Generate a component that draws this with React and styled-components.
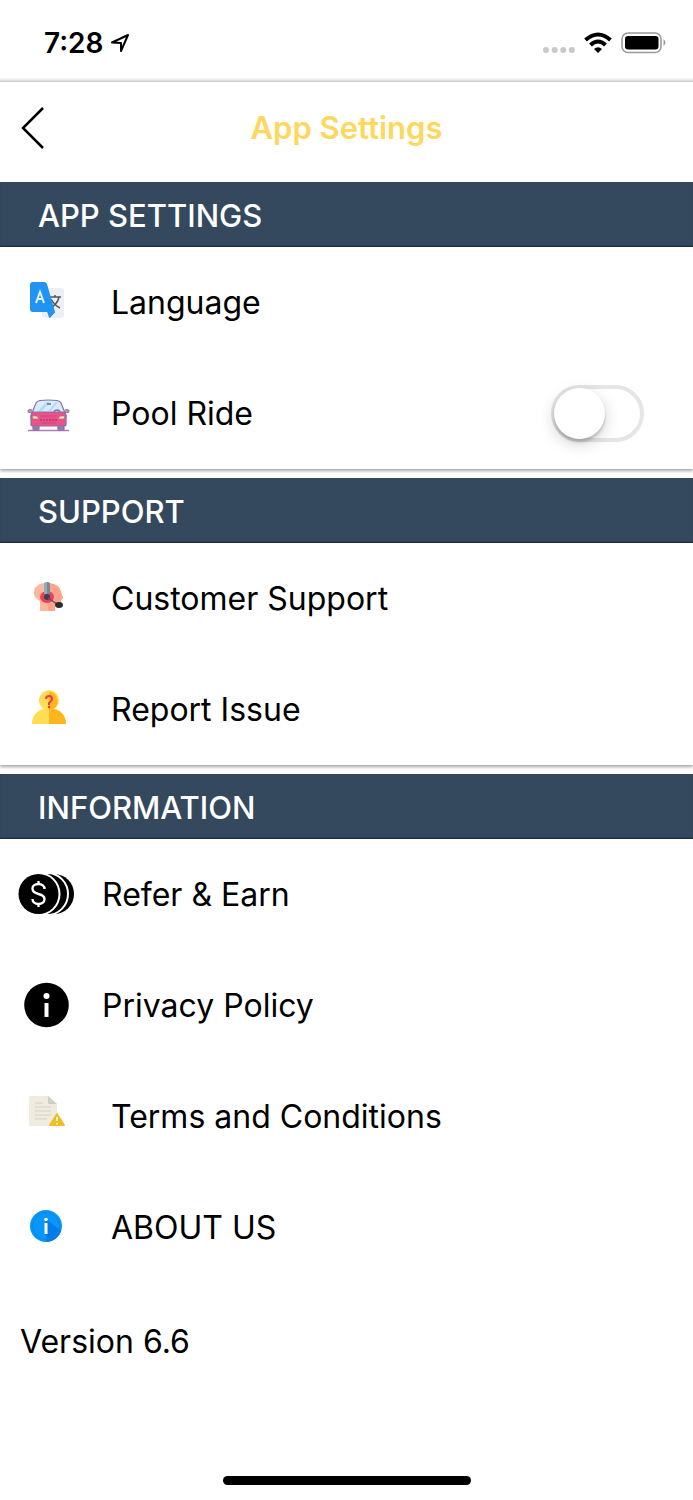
import { useState } from "react";
import styled, { createGlobalStyle } from "styled-components";

const GlobalStyle = createGlobalStyle`
  * {
    box-sizing: border-box;
  }

  body {
    margin: 0;
    background: #fff;
    color: #000;
    font-family: Inter, "Liberation Sans", sans-serif;
  }
`;

const Screen = styled.div`
  display: flex;
  flex-direction: column;
  min-height: 100vh;
`;

const StatusBar = styled.div`
  display: flex;
  justify-content: space-between;
  align-items: center;
  height: 82px;
  padding: 4px 26px 0 44px;
  border-bottom: 1px solid #d0d0d0;
  box-shadow: inset 0 -4px 3px -3px rgba(0, 0, 0, 0.2);
`;

const StatusGroup = styled.div`
  display: flex;
  align-items: center;
  gap: ${(props) => props.$gap};
`;

const Time = styled.span`
  font-size: 28px;
  font-weight: 600;
  line-height: 32px;
`;

const TopBar = styled.header`
  display: grid;
  grid-template-columns: 64px 1fr 64px;
  align-items: center;
  height: 100px;
  padding-bottom: 8px;
`;

const BackButton = styled.button`
  display: flex;
  align-items: center;
  height: 64px;
  padding: 0 0 0 20px;
  border: none;
  background: none;
  cursor: pointer;
`;

const Title = styled.h1`
  margin: 0;
  color: #fdd75e;
  font-size: 31px;
  font-weight: 600;
  line-height: 40px;
  text-align: center;
`;

const Section = styled.section`
  margin-bottom: ${(props) => (props.$last ? "0" : "9px")};
  box-shadow: ${(props) =>
    props.$last ? "none" : "0 2px 3px rgba(0, 0, 0, 0.35)"};
`;

const SectionTitle = styled.h2`
  height: 65px;
  margin: 0;
  padding: 0 38px;
  background: #34495e;
  box-shadow: inset 0 -2px 2px -1px #14253a;
  color: #fff;
  font-size: 31px;
  font-weight: 500;
  line-height: 67px;
`;

const List = styled.ul`
  margin: 0;
  padding: 0;
  list-style: none;
`;

const Item = styled.li`
  display: flex;
  align-items: center;
  justify-content: space-between;
  height: 111px;
  padding-right: 49px;
`;

const RowButton = styled.button`
  display: flex;
  align-items: center;
  flex: 1;
  gap: ${(props) => (props.$wide ? "27px" : "36px")};
  height: 111px;
  padding: 0 0 0 18px;
  border: none;
  background: none;
  color: inherit;
  font-family: inherit;
  font-size: 32px;
  line-height: 40px;
  text-align: left;
  cursor: pointer;
`;

const Icon = styled.svg`
  flex: none;
  width: 57px;
  height: 57px;
`;

const Switch = styled.input`
  appearance: none;
  display: flex;
  align-items: center;
  width: 93px;
  height: 57px;
  margin: 0;
  border: 4px solid #e5e5e5;
  border-radius: 29px;
  cursor: pointer;

  &::before {
    content: "";
    width: 51px;
    height: 51px;
    margin-left: ${(props) => (props.checked ? "35px" : "-1px")};
    border-radius: 50%;
    background: #fff;
    box-shadow: 0 5px 16px rgba(0, 0, 0, 0.18), 0 3px 3px rgba(0, 0, 0, 0.18);
  }

  &:checked {
    border-color: #4cd964;
    background: #4cd964;
  }
`;

const Version = styled.p`
  margin: 39px 20px;
  font-size: 32px;
  line-height: 40px;
`;

const HomeIndicator = styled.div`
  width: 248px;
  height: 9px;
  margin: auto auto 15px;
  border-radius: 5px;
  background: #000;
`;

const LanguageIcon = () => (
  <Icon viewBox="0 0 57 57" aria-hidden="true">
    <rect x="24" y="14" width="22" height="30" rx="3" fill="#eceff3" />
    <g fill="none" stroke="#50565e" strokeWidth="1.5">
      <path d="M31 23h12M37 21v2M41 23c-1 5-5 9-9 11M33 25c2 4 5 7 9 9" />
    </g>
    <path d="M30 38h7l-6 6z" fill="#0b6fd0" />
    <path
      d="M15 8h11a3 3 0 0 1 3 2l8 28-5 6-3-6H15a3 3 0 0 1-3-3V11a3 3 0 0 1 3-3z"
      fill="#2093f3"
    />
    <path
      d="M18 29l4-11 4 11M19.500 25h5"
      fill="none"
      stroke="#e4f2ff"
      strokeWidth="2"
    />
  </Icon>
);

const CarIcon = () => (
  <Icon viewBox="0 -1 57 57" aria-hidden="true">
    <path d="M10 44.500h41" stroke="#ae7ab5" strokeWidth="1.500" />
    <g stroke="#8770a8" strokeWidth="1.200">
      <path d="M15 36h6v7q0 1-1 1h-4q-1 0-1-1zM40 36h6v7q0 1-1 1h-4q-1 0-1-1z" fill="#8e83ad" />
      <path d="M14 26q-4 1-4-1 1-2 4-1M47 26q4 1 4-1-1-2-4-1" fill="#d9a3cf" />
      <path d="M14 27l4-10q1-2 4-2.500 8-1 17 0 3 .5 4 2.500l4 10z" fill="#d7edff" />
      <path d="M14 26h33q2 4 1 8v5q0 1-2 1H15q-2 0-2-1v-5q-1-4 1-8z" fill="#ec5287" />
    </g>
    <path d="M20 25l8-9h4l-8 9zM30 25l8-9h2l-7 9z" fill="#b5d8f8" />
    <path d="M29 18h4" stroke="#68669b" strokeWidth="1.500" />
    <path d="M36 27q0-3 3-3t3 3" fill="none" stroke="#8770a8" strokeWidth="1.500" />
    <path d="M14 30h5l2 3h-6zM47 30h-5l-2 3h6z" fill="#ffe4a4" stroke="#ad6490" strokeWidth=".7" />
    <path d="M22 30h17M23 37h15" stroke="#d04580" />
    <path d="M22 34h17" stroke="#b6427d" strokeWidth="2" strokeDasharray="2 1" />
  </Icon>
);

const SupportIcon = () => (
  <Icon viewBox="0 -1 57 57" aria-hidden="true">
    <path
      d="M22 40V30Q15 27 16 20q2-8 12-8 13 0 15 9l2 6-2 2v3q0 2-6 2v6z"
      fill="#ffb89e"
    />
    <path d="M30 12q12 1 13 9l2 6-2 2v3q0 2-6 2v6h-7z" fill="#ffa38a" />
    <ellipse cx="29" cy="26" rx="7" ry="6" fill="#ed3e5b" />
    <path d="M26 12q3-2 6 0v11h-6z" fill="#91acb9" />
    <path d="M29 11l3 1v11h-3z" fill="#718b9b" />
    <circle cx="29" cy="26" r="3" fill="#394252" />
    <path d="M30 27l9 6" stroke="#555b5b" strokeWidth="1.500" />
    <ellipse cx="41" cy="34" rx="4" ry="3" fill="#292d30" />
  </Icon>
);

const ReportIcon = () => (
  <Icon viewBox="0 -1 57 57" aria-hidden="true">
    <path d="M14 42c0-8 5-14 12-15a10 10 0 1 1 10 0c7 1 12 7 12 15z" fill="#ffdc52" />
    <path d="M31 9.500a10 10 0 0 1 5 17.500c7 1 12 7 12 15H31z" fill="#ffb51e" />
    <path
      d="M28 17q0-3 3-3t3 3q0 2-3 4v2"
      fill="none"
      stroke="#e83b4e"
      strokeWidth="2"
    />
    <circle cx="31" cy="25" r="1.200" fill="#e83b4e" />
  </Icon>
);

const CoinsIcon = () => (
  <Icon viewBox="0 -1 57 57" aria-hidden="true">
    <path d="M36 7a20 20 0 0 1 0 40l-6-2V9z" />
    <path d="M29 6a21 21 0 0 1 0 42l-4-2V8z" stroke="#fff" strokeWidth="2" />
    <circle cx="20.500" cy="27" r="22" fill="#fff" />
    <circle cx="20.500" cy="27" r="20" />
    <path
      d="M26.500 22c0-3-2.500-5-6-5s-6 2-6 4.500c0 3 2 4.500 6 5.500s6 2.500 6 5c0 3-2.500 5-6 5s-6-2-6-5M20.500 14v3M20.500 37v3"
      fill="none"
      stroke="#fff"
      strokeWidth="2.400"
    />
  </Icon>
);

const PrivacyIcon = () => (
  <Icon viewBox="0 -1 57 57" aria-hidden="true">
    <circle cx="28.500" cy="27" r="22.300" />
    <circle cx="28.500" cy="18" r="3" fill="#fff" />
    <rect x="26.500" y="25" width="4" height="14" fill="#fff" />
  </Icon>
);

const TermsIcon = () => (
  <Icon viewBox="0 -1 57 57" aria-hidden="true">
    <path d="M12 7h18l9 8v22H12q-1 0-1-1V8q0-1 1-1z" fill="#efecdf" />
    <path d="M30 7l9 8h-9z" fill="#d2cebf" />
    <path d="M17 14h8M17 18h16M17 22h16M17 26h16M17 30h12" stroke="#d5d1c3" />
    <path d="M38 25q1-2 2 0l7 11q0 1-1 1H32q-1 0-1-1z" fill="#edbf21" />
    <path d="M39 28v4M39 34v1.500" stroke="#fff" strokeWidth="1.500" />
  </Icon>
);

const AboutIcon = () => (
  <Icon viewBox="0 -1 57 57" aria-hidden="true">
    <circle cx="28" cy="26" r="16" fill="#0796fa" />
    <path d="M28 19l15 12a16 16 0 0 1-15 11z" fill="#087ae8" />
    <circle cx="28" cy="26" r="13.500" fill="none" stroke="#0788ed" />
    <circle cx="28" cy="19.500" r="1.800" fill="#fff" />
    <rect x="26.500" y="23" width="3" height="11" fill="#fff" />
  </Icon>
);

const LocationArrow = () => (
  <svg width="20" height="20" viewBox="0 0 20 20" aria-hidden="true">
    <path
      d="M2 9.500L18 2l-7 16v-8z"
      fill="none"
      stroke="#000"
      strokeWidth="2"
      strokeLinejoin="round"
    />
  </svg>
);

const SignalDots = () => (
  <svg width="32" height="22" viewBox="0 0 32 22" aria-hidden="true">
    <g fill="#c9c9c9">
      <circle cx="3" cy="18" r="3" />
      <circle cx="11.600" cy="18" r="3" />
      <circle cx="20.200" cy="18" r="3" />
      <circle cx="28.800" cy="18" r="3" />
    </g>
  </svg>
);

const Wifi = () => (
  <svg width="28" height="22" viewBox="0 0 28 22" aria-hidden="true">
    <g fill="none" stroke="#000" strokeWidth="4">
      <path d="M1.500 8q12.500-11 25 0" />
      <path d="M6.500 13q7.500-7 15 0" />
    </g>
    <path d="M10 17q4-3.500 8 0l-4 4z" />
  </svg>
);

const Battery = () => (
  <svg width="46" height="22" viewBox="0 0 46 22" aria-hidden="true">
    <rect x="1" y="1" width="39" height="19.500" rx="6" fill="none" stroke="#999" strokeWidth="1.600" />
    <rect x="4" y="4" width="33.500" height="13.500" rx="3" />
    <path d="M42.500 7q4 3.500 0 7z" fill="#999" />
  </svg>
);

const sections = [
  {
    title: "APP SETTINGS",
    items: [
      { label: "Language", icon: LanguageIcon },
      { label: "Pool Ride", icon: CarIcon, toggle: true },
    ],
  },
  {
    title: "SUPPORT",
    items: [
      { label: "Customer Support", icon: SupportIcon },
      { label: "Report Issue", icon: ReportIcon },
    ],
  },
  {
    title: "INFORMATION",
    items: [
      { label: "Refer & Earn", icon: CoinsIcon, wide: true },
      { label: "Privacy Policy", icon: PrivacyIcon, wide: true },
      { label: "Terms and Conditions", icon: TermsIcon },
      { label: "ABOUT US", icon: AboutIcon },
    ],
  },
];

export default function App() {
  const [poolRide, setPoolRide] = useState(false);

  return (
    <>
      <GlobalStyle />
      <Screen>
        <StatusBar>
          <StatusGroup $gap="6px">
            <Time>7:28</Time>
            <LocationArrow />
          </StatusGroup>
          <StatusGroup $gap="9px">
            <SignalDots />
            <Wifi />
            <Battery />
          </StatusGroup>
        </StatusBar>

        <TopBar>
          <BackButton aria-label="Back">
            <svg width="26" height="42" viewBox="0 0 26 42" aria-hidden="true">
              <path d="M23 1L3 21l20 20" fill="none" stroke="#000" strokeWidth="2.500" />
            </svg>
          </BackButton>
          <Title>App Settings</Title>
        </TopBar>

        <main>
          {sections.map((section, index) => (
            <Section key={section.title} $last={index === sections.length - 1}>
              <SectionTitle>{section.title}</SectionTitle>
              <List>
                {section.items.map(({ label, icon: ItemIcon, toggle, wide }) => (
                  <Item key={label}>
                    {toggle ? (
                      <>
                        <RowButton as="label" htmlFor="pool-ride">
                          <ItemIcon />
                          {label}
                        </RowButton>
                        <Switch
                          id="pool-ride"
                          type="checkbox"
                          checked={poolRide}
                          onChange={(e) => setPoolRide(e.target.checked)}
                        />
                      </>
                    ) : (
                      <RowButton $wide={wide}>
                        <ItemIcon />
                        {label}
                      </RowButton>
                    )}
                  </Item>
                ))}
              </List>
            </Section>
          ))}
          <Version>Version 6.6</Version>
        </main>

        <HomeIndicator />
      </Screen>
    </>
  );
}
